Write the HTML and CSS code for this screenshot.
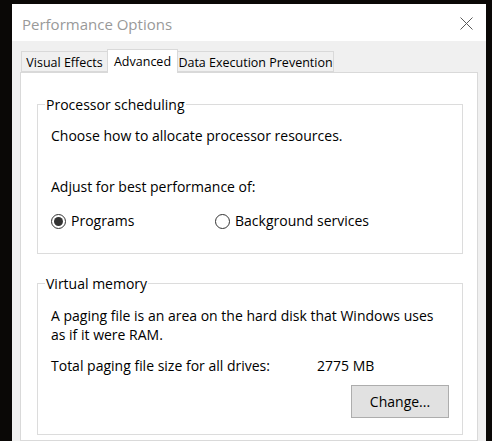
FILE: index.html
```html
<!DOCTYPE html>
<html lang="en">
<head>
<meta charset="utf-8">
<title>Performance Options</title>
<link rel="stylesheet" href="styles.css">
</head>
<body>
<div class="window">
  <div class="titlebar">
    <span class="title">Performance Options</span>
    <svg class="close" width="13" height="13" viewBox="0 0 13 13"><path d="M0.5 0.5 L12.5 12.5 M12.5 0.5 L0.5 12.5" stroke="#5a5a5a" stroke-width="1" fill="none"/></svg>
  </div>
  <div class="tabs">
    <div class="tab tab-visual">Visual Effects</div>
    <div class="tab tab-active">Advanced</div>
    <div class="tab tab-dep">Data Execution Prevention</div>
  </div>
  <div class="panel">
    <div class="group group-cpu">
      <span class="group-title">Processor scheduling</span>
      <p class="line line-choose">Choose how to allocate processor resources.</p>
      <p class="line line-adjust">Adjust for best performance of:</p>
      <div class="radios">
        <label class="radio radio-first"><span class="dot checked"></span>Programs</label>
        <label class="radio"><span class="dot"></span>Background services</label>
      </div>
    </div>
    <div class="group group-vm">
      <span class="group-title">Virtual memory</span>
      <p class="para">A paging file is an area on the hard disk that Windows uses<br>as if it were RAM.</p>
      <div class="line total"><span class="total-label">Total paging file size for all drives:</span><span>2775 MB</span></div>
      <button class="btn">Change...</button>
    </div>
  </div>
</div>
</body>
</html>
```
FILE: styles.css
```css
html, body {
  margin: 0;
  padding: 0;
}
body {
  width: 492px;
  height: 441px;
  overflow: hidden;
  background: #0a0806;
  font-family: "Open Sans", "Noto Sans", sans-serif;
  font-size: 14px;
  color: #000;
}
.window {
  margin: 4px 0 0 12px;
  width: 474px;
  height: 437px;
  background: #f0f0f0;
  display: flex;
  flex-direction: column;
  overflow: hidden;
}
.titlebar {
  height: 37px;
  flex: none;
  background: #fff;
  display: flex;
  align-items: center;
  justify-content: space-between;
  padding: 0 13px 0 10px;
}
.title {
  color: #999;
  font-size: 15px;
  line-height: 20px;
  margin-top: 2px;
}
.close {
  display: block;
  margin-top: 1px;
}
.tabs {
  display: flex;
  align-items: flex-end;
  padding-left: 9px;
  margin-top: 9px;
  height: 22px;
  flex: none;
  position: relative;
  z-index: 1;
}
.tab {
  box-sizing: border-box;
  height: 21px;
  padding-top: 1px;
  line-height: 19px;
  font-size: 12.5px;
  text-align: center;
  border: 1px solid #d9d9d9;
  background: #f0f0f0;
  white-space: nowrap;
}
.tab-visual {
  width: 86px;
  border-right: none;
}
.tab-active {
  width: 71px;
  height: 24px;
  margin-bottom: -1px;
  background: #fff;
  border-bottom: none;
  padding-top: 0;
  line-height: 23px;
}
.tab-dep {
  width: 156px;
  border-left: none;
}
.panel {
  flex: 1;
  margin: 0 8px 0 8px;
  border: 1px solid #d9d9d9;
  background: #fff;
  padding: 0 14px 0 16px;
}
.group {
  border: 1px solid #dcdcdc;
  padding: 0 13px;
  display: flex;
  flex-direction: column;
  align-items: flex-start;
}
.group-cpu {
  margin-top: 31px;
  padding-bottom: 22px;
}
.group-vm {
  margin-top: 29px;
  padding-bottom: 16px;
}
.group-title {
  margin: -9px 0 0 -6px;
  padding: 0 1px;
  background: #fff;
  line-height: 18px;
}
.line {
  margin: 0;
  line-height: 20px;
}
.line-choose {
  margin-top: 12px;
}
.line-adjust {
  margin-top: 31px;
}
.radios {
  margin-top: 14px;
  display: flex;
  line-height: 20px;
}
.radio {
  display: flex;
  align-items: center;
}
.radio-first {
  width: 164px;
}
.dot {
  box-sizing: border-box;
  width: 15px;
  height: 15px;
  border: 1px solid #333;
  border-radius: 50%;
  margin-right: 5px;
  display: flex;
  align-items: center;
  justify-content: center;
}
.dot.checked::after {
  content: "";
  width: 9px;
  height: 9px;
  border-radius: 50%;
  background: #333;
}
.para {
  margin: 13px 0 0 0;
  line-height: 19px;
}
.total {
  margin-top: 12px;
  display: flex;
}
.total-label {
  width: 266px;
}
.btn {
  align-self: flex-end;
  margin-top: 9px;
  width: 98px;
  height: 33px;
  box-sizing: border-box;
  background: #e1e1e1;
  border: 1px solid #adadad;
  font-family: inherit;
  font-size: 14px;
  color: #000;
  padding: 0;
}
```
